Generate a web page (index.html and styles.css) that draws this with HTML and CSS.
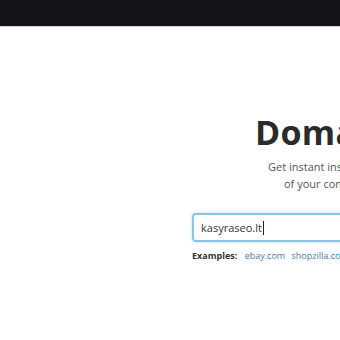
FILE: index.html
```html
<!DOCTYPE html>
<html lang="en">
<head>
    <meta charset="UTF-8">
    <meta name="viewport" content="width=device-width, initial-scale=1.0">
    <title>Domain Analyzer</title>
    <link rel="stylesheet" href="styles.css">
</head>
<body>
    <header class="topbar"></header>

    <main class="hero">
        <h1 class="hero-title">Domain Analyzer</h1>
        <p class="hero-lead">
            <span class="lead-line lead-first">Get instant insights into the web presence</span>
            <span class="lead-line lead-second">of your competitors and partners</span>
        </p>

        <div class="search">
            <div class="search-box">
                <span class="search-value">kasyraseo.lt</span><span class="caret"></span>
            </div>
        </div>

        <div class="examples">
            <strong>Examples:</strong>
            <a href="#">ebay.com</a>
            <a href="#">shopzilla.com</a>
        </div>
    </main>
</body>
</html>
```

FILE: styles.css
```css
html, body {
    margin: 0;
    padding: 0;
    overflow: hidden;
    background-color: #ffffff;
}
body {
    font-family: "Open Sans", "Noto Sans", sans-serif;
    color: #333333;
    width: 340px;
}
.topbar {
    height: 26px;
    background-color: #131417;
    border-bottom: 1px solid #d4d4d4;
}
.hero {
    padding: 85px 0 0 192px;
    white-space: nowrap;
}
.hero-title {
    margin: 0 0 0 63px;
    font-size: 34px;
    font-weight: 700;
    line-height: 40px;
    color: #2b2b2b;
    letter-spacing: 0.3px;
}
.hero-lead {
    margin: 6px 0 0 0;
    font-size: 11px;
    line-height: 17px;
    color: #555555;
}
.lead-line {
    display: block;
}
.lead-first {
    margin-left: 76px;
}
.lead-second {
    margin-left: 92px;
}
.search {
    margin-top: 21px;
}
.search-box {
    box-sizing: border-box;
    width: 400px;
    height: 29px;
    border: 2px solid #8ec3e3;
    border-radius: 4px;
    box-shadow: 0 0 3px rgba(102, 175, 233, 0.5);
    padding: 0 0 0 7px;
    display: flex;
    align-items: center;
    font-size: 11px;
    color: #333333;
}
.caret {
    display: inline-block;
    width: 1px;
    height: 14px;
    background-color: #222222;
    margin-left: 1px;
}
.examples {
    margin-top: 7px;
    font-size: 9px;
    line-height: 14px;
}
.examples strong {
    color: #333333;
    margin-right: 5px;
}
.examples a {
    color: #3d7ca8;
    text-decoration: none;
    margin-right: 4px;
}
```
